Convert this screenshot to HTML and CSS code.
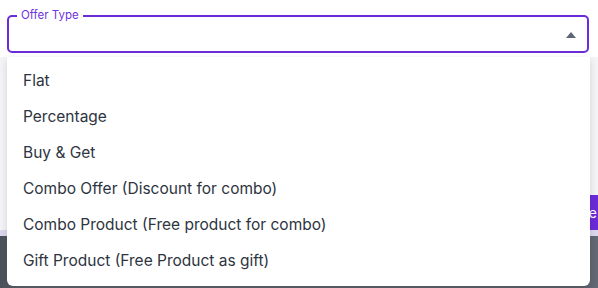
FILE: index.html
```html
<!DOCTYPE html>
<html lang="en">
<head>
    <meta charset="UTF-8">
    <title>Offer Type</title>
    <link rel="stylesheet" href="styles.css">
</head>
<body>

<div class="page">
    <div class="field-row">
        <div class="select-field">
            <span class="field-label">Offer Type</span>
            <svg class="caret" width="10" height="6" viewBox="0 0 10 6"><path d="M0 6 L5 0 L10 6 Z" fill="#5d6775"/></svg>
        </div>
    </div>

    <div class="panel">
        <div class="panel-actions">
            <button class="save-btn">Save</button>
        </div>
        <div class="panel-gap"></div>
    </div>
    <div class="backdrop"></div>

    <ul class="dropdown">
        <li>Flat</li>
        <li>Percentage</li>
        <li>Buy &amp; Get</li>
        <li>Combo Offer (Discount for combo)</li>
        <li>Combo Product (Free product for combo)</li>
        <li>Gift Product (Free Product as gift)</li>
    </ul>
</div>

</body>
</html>
```

FILE: styles.css
```css
body {
    margin: 0;
    font-family: Inter, "Open Sans", sans-serif;
    background-color: #ffffff;
}
.page {
    position: relative;
    width: 598px;
    height: 288px;
    overflow: hidden;
}
.field-row {
    padding: 15px 9px 0 7px;
    height: 42px;
    background-color: #ffffff;
}
.select-field {
    position: relative;
    height: 34px;
    border: 2px solid #6c2bd9;
    border-radius: 5px;
    display: flex;
    align-items: center;
    justify-content: flex-end;
    padding-right: 11px;
}
.field-label {
    position: absolute;
    top: -9px;
    left: 8px;
    padding: 0 4px;
    background-color: #ffffff;
    color: #7035dc;
    font-size: 11.5px;
    line-height: 14px;
}
.caret {
    margin-top: 1px;
}
.panel {
    height: 179px;
    background-color: #f5f5f7;
    display: flex;
    flex-direction: column;
    justify-content: flex-end;
}
.panel-actions {
    display: flex;
    justify-content: flex-end;
}
.save-btn {
    height: 35px;
    width: 60px;
    margin-right: -4px;
    border: none;
    background-color: #6c2bd9;
    color: #ffffff;
    font-family: inherit;
    font-size: 14px;
    text-align: right;
    padding: 0 5px 0 0;
}
.panel-gap {
    height: 6px;
    background-color: #ddd8ee;
}
.backdrop {
    height: 52px;
    background: linear-gradient(90deg, #4a5059 0%, #5d636d 3%, #5d636d 97%, #646b76 100%);
}
.dropdown {
    position: absolute;
    top: 57px;
    left: 7px;
    width: 583px;
    margin: 0;
    padding: 6px 0 7px 0;
    list-style: none;
    background-color: #ffffff;
    border-radius: 0 0 6px 6px;
    box-shadow: 0 3px 8px rgba(0, 0, 0, 0.15);
}
.dropdown li {
    height: 36px;
    line-height: 36px;
    padding-left: 16px;
    font-size: 15.5px;
    color: #2e3440;
}
```
